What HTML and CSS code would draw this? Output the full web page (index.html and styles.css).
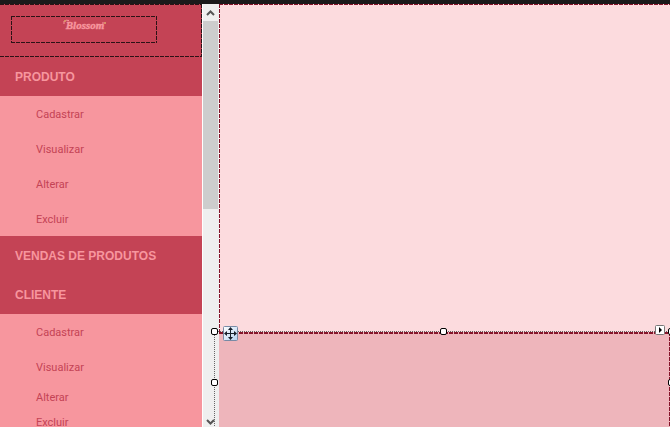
FILE: index.html
```html
<!DOCTYPE html>
<html lang="pt-BR">
<head>
<meta charset="utf-8">
<title>Blossom</title>
<link rel="stylesheet" href="styles.css">
</head>
<body>
<div class="titlebar"></div>
<div class="workspace">
  <nav class="sidebar">
    <header class="brand">
      <div class="logo-box">
        <svg class="logo" viewBox="0 0 46 12" role="img" aria-label="Blossom">
          <text x="24" y="10" text-anchor="middle" class="logo-text">Blossom</text>
          <path d="M3 2.500q2-2 5-1M3 2v3M41 4h4" class="flourish"/>
          <circle cx="4" cy="2" r="1" class="petal"/>
          <circle cx="44" cy="4" r="1" class="petal"/>
        </svg>
      </div>
    </header>
    <button class="group">PRODUTO</button>
    <div class="submenu">
      <button class="item">Cadastrar</button>
      <button class="item">Visualizar</button>
      <button class="item">Alterar</button>
      <button class="item">Excluir</button>
    </div>
    <button class="group">VENDAS DE PRODUTOS</button>
    <button class="group">CLIENTE</button>
    <div class="submenu">
      <button class="item">Cadastrar</button>
      <button class="item">Visualizar</button>
      <button class="item compact">Alterar</button>
      <button class="item compact">Excluir</button>
    </div>
  </nav>
  <div class="scrollbar">
    <svg class="arrow" viewBox="0 0 15 17"><path d="M4 11 7.500 7.500 11 11"/></svg>
    <div class="thumb"></div>
    <svg class="arrow down" viewBox="0 0 15 10"><path d="M4 3 7.500 6.500 11 3"/></svg>
  </div>
  <main class="canvas">
    <section class="stage"></section>
    <section class="panel">
      <div class="selection">
        <i class="handle left top"></i>
        <i class="handle center top"></i>
        <i class="handle right top"></i>
        <i class="handle left middle"></i>
        <i class="handle right middle"></i>
        <svg class="move" viewBox="0 0 15 15">
          <defs>
            <linearGradient id="sheen" x2="1" y2="1">
              <stop offset="0" stop-color="#fff"/>
              <stop offset="1" stop-color="#b4d2f2"/>
            </linearGradient>
          </defs>
          <rect x=".5" y=".5" width="14" height="14" rx="1" class="move-box"/>
          <path d="M7.500 3v9M3 7.500h9" class="move-line"/>
          <path d="M7.500 1 10 4H5zM7.500 14 5 11h5zM1 7.500 4 5v5zM14 7.500 11 10V5z" class="move-head"/>
        </svg>
        <svg class="tag" viewBox="0 0 10 10">
          <rect x=".5" y=".5" width="9" height="9" rx="1" class="tag-box"/>
          <path d="M4 2v6l3-3z"/>
        </svg>
      </div>
    </section>
  </main>
</div>
</body>
</html>
```
FILE: styles.css
```css
* { box-sizing: border-box; }

body {
  margin: 0;
  height: 100vh;
  display: flex;
  flex-direction: column;
  overflow: hidden;
  font-family: "Liberation Sans", Arial, sans-serif;
}

.titlebar { flex: 0 0 4px; background: #1b1a1b; }

.workspace {
  flex: 1;
  min-height: 0;
  display: grid;
  grid-template-columns: 202px 17px 1fr;
}

.sidebar {
  display: flex;
  flex-direction: column;
  overflow: hidden;
  background: #f7969e;
}

.brand, .logo-box {
  --dash: #2b1216;
  background:
    repeating-linear-gradient(90deg, var(--dash) 0 4px, transparent 4px 5px) top / 100% 1px no-repeat,
    repeating-linear-gradient(90deg, var(--dash) 0 4px, transparent 4px 5px) bottom / 100% 1px no-repeat,
    repeating-linear-gradient(var(--dash) 0 4px, transparent 4px 5px) right / 1px 100% no-repeat,
    repeating-linear-gradient(var(--dash) 0 4px, transparent 4px 5px) left / var(--left, 0) 100% no-repeat,
    #c44355;
}

.brand { flex: 0 0 53px; padding: 12px 45px 14px 11px; }

.logo-box {
  --left: 1px;
  height: 27px;
  display: flex;
  justify-content: center;
  padding-top: 3px;
}

.logo { width: 46px; height: 12px; }
.logo-text {
  font: italic bold 11px "Liberation Serif", serif;
  fill: #f7969e;
  stroke: #f7969e;
  stroke-width: .4;
}
.flourish { fill: none; stroke: #f7969e; }
.petal { fill: #d79a62; }

button {
  border: 0;
  margin: 0;
  text-align: left;
  font-family: inherit;
}

.group {
  flex: 0 0 39px;
  padding: 0 15px;
  background: #c44355;
  color: #f7969e;
  font-size: 12px;
  font-weight: bold;
}

.submenu { display: flex; flex-direction: column; flex: none; }

.item {
  height: 35px;
  padding: 2px 36px 0;
  background: #f7969e;
  color: #c44355;
  font: 11px Roboto, sans-serif;
}
.compact { height: 25px; }

.scrollbar {
  display: flex;
  flex-direction: column;
  padding-right: 1px;
  background: #efefef;
  border-left: 1px solid #fff;
}
.arrow { flex: 0 0 17px; width: 15px; }
.arrow path { fill: none; stroke: #555; stroke-width: 2; }
.down { margin-top: auto; flex-basis: 10px; }
.thumb { height: 188px; background: #cdcdcd; }

.canvas {
  display: grid;
  grid-template-rows: 328px 1fr;
  min-width: 0;
}

.stage {
  background:
    repeating-linear-gradient(90deg, #85142a 0 4px, transparent 4px 5px) top / 100% 1px no-repeat,
    repeating-linear-gradient(#85142a 0 4px, #fff 4px 5px) left / 1px 100% no-repeat,
    #fcdbde;
}

.panel {
  position: relative;
  background:
    repeating-linear-gradient(90deg, #85142a 0 4px, transparent 4px 5px) top / 100% 2px no-repeat,
    repeating-linear-gradient(#85142a 0 4px, transparent 4px 5px) right / 1px 100% no-repeat,
    #eeb5bb;
}

.selection {
  position: absolute;
  inset: -1px -2px 0 -5px;
  background:
    repeating-linear-gradient(90deg, #666 0 1px, transparent 1px 2px) top / 100% 1px no-repeat,
    repeating-linear-gradient(#666 0 1px, transparent 1px 2px) left / 1px 100% no-repeat;
}

.handle {
  position: absolute;
  width: 7px;
  height: 7px;
  background: #fff;
  border: 1px solid #000;
  border-radius: 2px;
}
.left { left: -3px; }
.center { left: calc(50% - 3px); }
.right { right: -3px; }
.top { top: -3px; }
.middle { top: 48px; }

.move {
  position: absolute;
  left: 9px;
  top: -5px;
  width: 15px;
  height: 15px;
}
.move-box { fill: url(#sheen); stroke: #788aa5; }
.move-line { stroke: #17202c; stroke-width: 1; }
.move-head { fill: #17202c; }

.tag {
  position: absolute;
  right: 7px;
  top: -6px;
  width: 10px;
  height: 10px;
}
.tag-box { fill: #fff; stroke: #777; }
```
